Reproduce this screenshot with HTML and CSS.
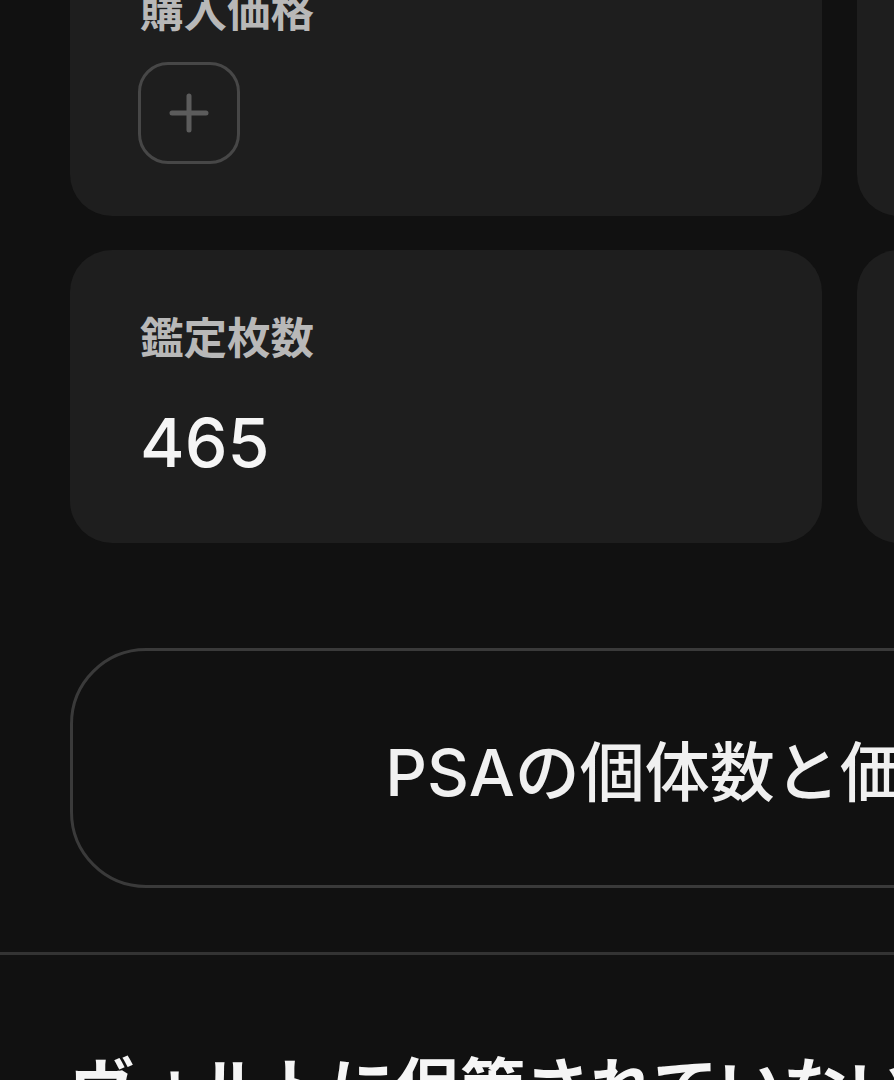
FILE: index.html
```html
<!DOCTYPE html>
<html lang="ja">
<head>
<meta charset="utf-8">
<title>カード詳細</title>
<link rel="stylesheet" href="styles.css">
</head>
<body>
<main class="page">
  <section class="stats">
    <div class="card">
      <div class="card-label">購入価格</div>
      <div class="card-value">
        <button class="add-btn" aria-label="追加">
          <svg width="40" height="40" viewBox="0 0 40 40" aria-hidden="true">
            <path d="M20 3 V37 M3 20 H37" stroke="#5c5c5c" stroke-width="5" stroke-linecap="round" fill="none"/>
          </svg>
        </button>
      </div>
    </div>
    <div class="card">
      <div class="card-label">現在価格</div>
      <div class="card-value"><span class="value-text">¥12,800</span></div>
    </div>
    <div class="card">
      <div class="card-label">鑑定枚数</div>
      <div class="card-value"><span class="value-text">465</span></div>
    </div>
    <div class="card">
      <div class="card-label">PSA10枚数</div>
      <div class="card-value"><span class="value-text">128</span></div>
    </div>
  </section>

  <button class="psa-btn">PSAの個体数と価格推移を確認</button>

  <hr class="divider">

  <h2 class="section-title">ヴォルトに保管されていないカード</h2>
</main>
</body>
</html>
```

FILE: styles.css
```css
html, body {
  margin: 0;
  padding: 0;
  background: #111111;
  overflow: hidden;
}

body {
  font-family: Inter, "Noto Sans CJK JP", sans-serif;
  color: #f2f2f2;
}

.page {
  width: 1540px;
  padding: 0 70px;
  margin-top: -77px;
  display: flex;
  flex-direction: column;
}

.stats {
  display: grid;
  grid-template-columns: 752px 752px;
  column-gap: 35px;
  row-gap: 34px;
}

.card {
  background: #1e1e1e;
  border-radius: 42px;
  padding: 61px 70px 52px;
  display: flex;
  flex-direction: column;
}

.card-label {
  font-family: "Noto Sans CJK JP", sans-serif;
  font-size: 43.5px;
  line-height: 50px;
  font-weight: 700;
  color: #b8b8b8;
}

.card-value {
  margin-top: 28px;
  height: 102px;
  display: flex;
  align-items: center;
}

.value-text {
  font-family: Inter, "Noto Sans CJK JP", sans-serif;
  font-size: 68px;
  line-height: 86px;
  font-weight: 500;
  color: #f5f5f5;
  padding-top: 4px;
}

.add-btn {
  width: 102px;
  height: 102px;
  margin-left: -2px;
  box-sizing: border-box;
  border: 3px solid #474747;
  border-radius: 30px;
  background: transparent;
  display: flex;
  align-items: center;
  justify-content: center;
  padding: 0;
}

.psa-btn {
  margin-top: 105px;
  height: 240px;
  box-sizing: border-box;
  border: 3px solid #3a3a3a;
  border-radius: 76px;
  background: transparent;
  font-family: Inter, "Noto Sans CJK JP", sans-serif;
  font-size: 65px;
  font-weight: 500;
  color: #f0f0f0;
  padding: 0;
}

.divider {
  margin: 64px -70px 0;
  height: 3px;
  border: 0;
  background: #333333;
}

.section-title {
  margin: 90px 0 0;
  font-family: "Noto Sans CJK JP", sans-serif;
  font-size: 65px;
  line-height: 78px;
  font-weight: 700;
  color: #f5f5f5;
}
```
